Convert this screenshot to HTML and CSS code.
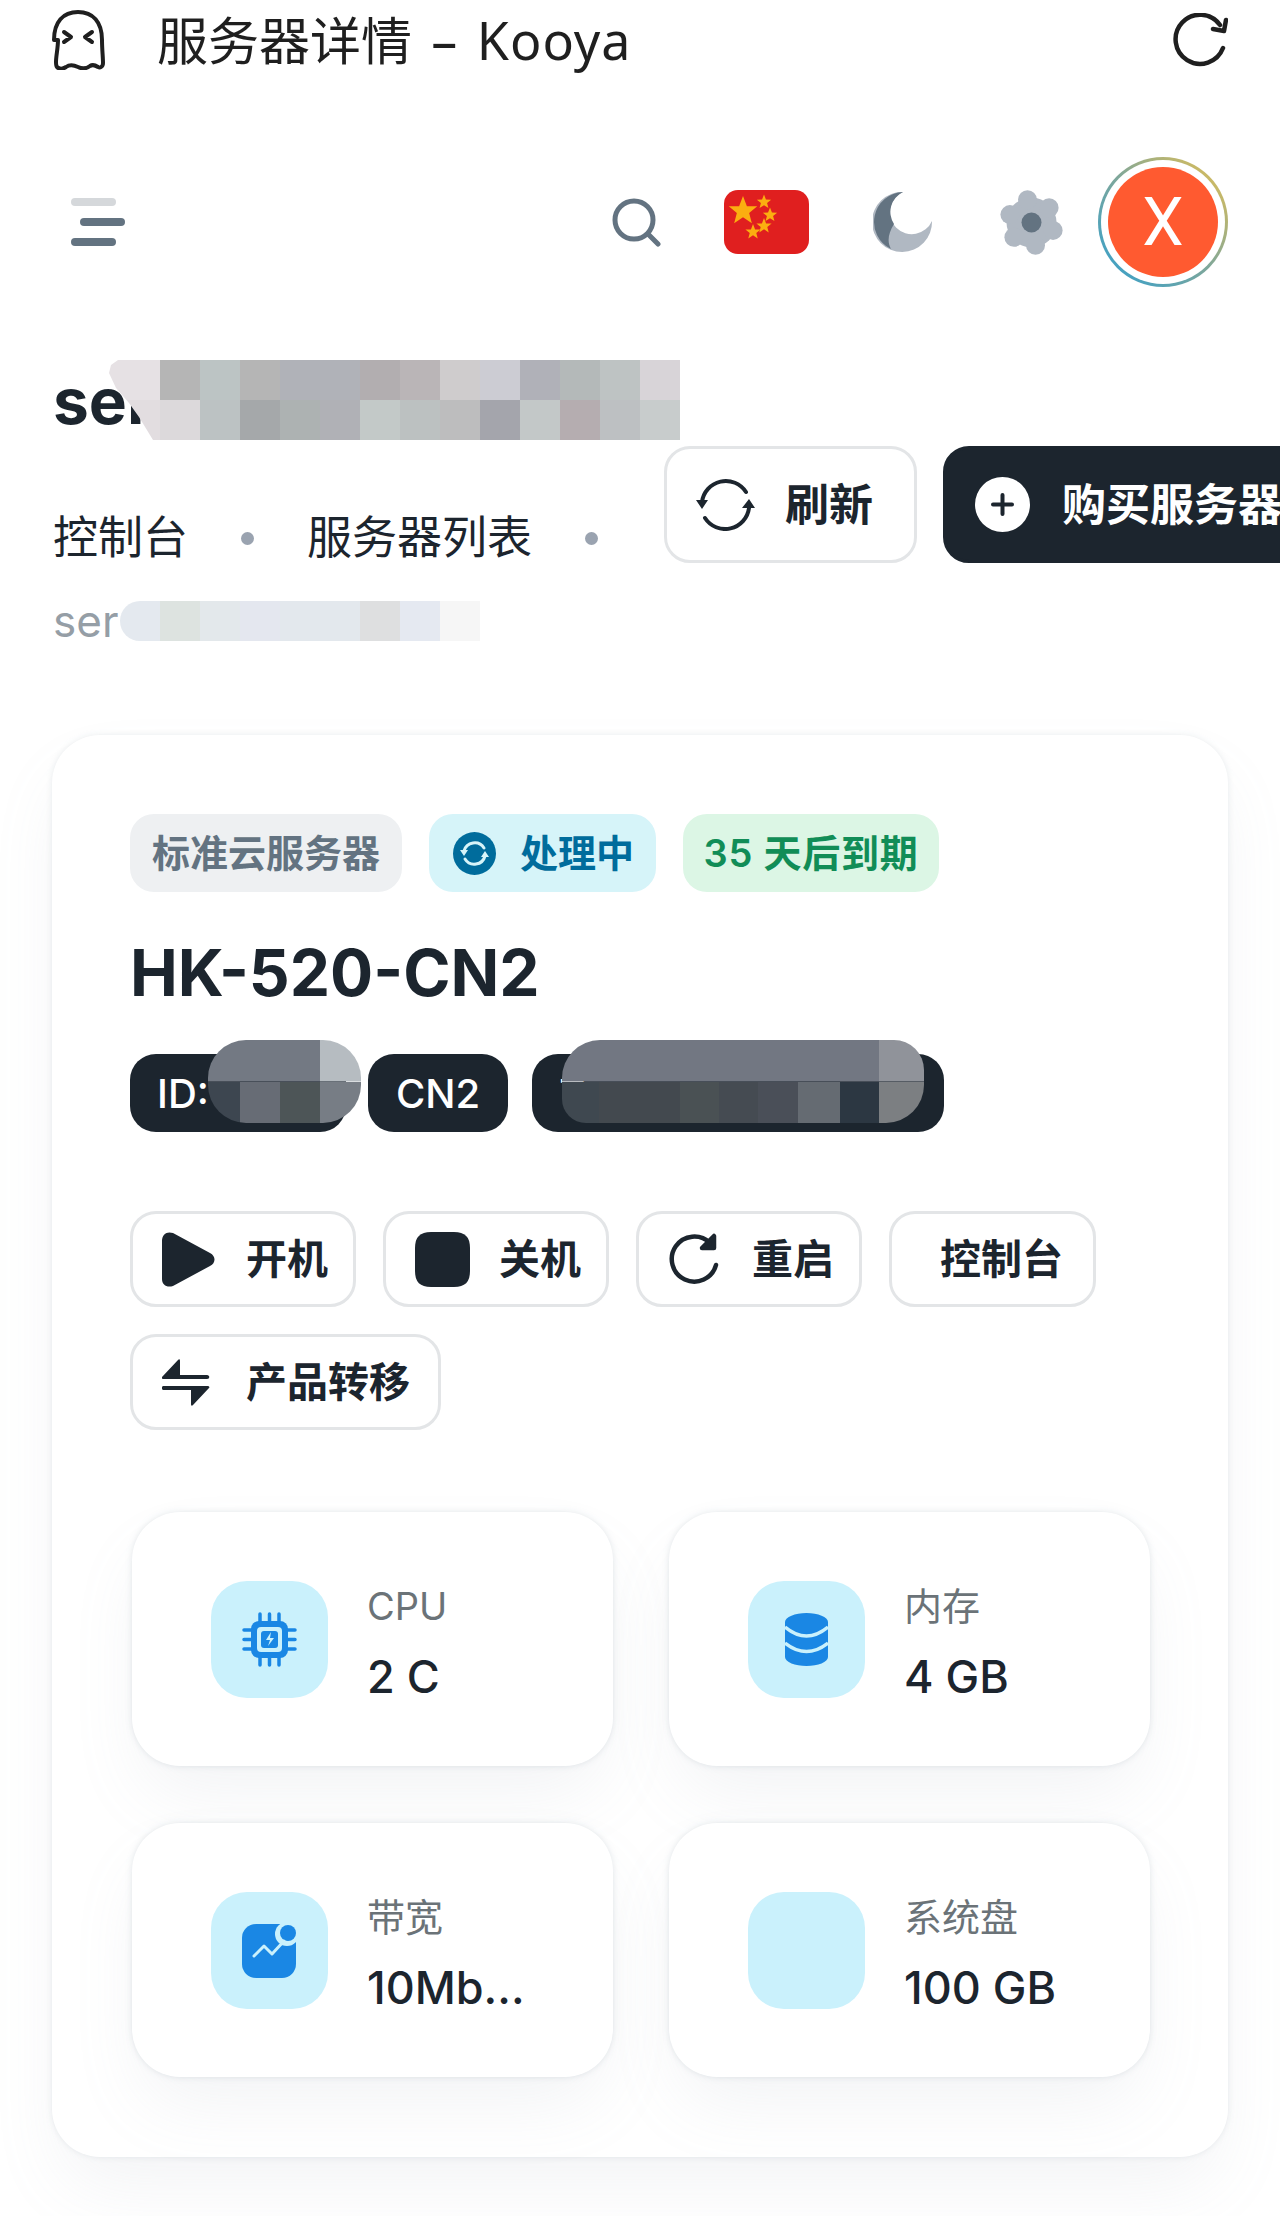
FILE: index.html
```html
<!DOCTYPE html>
<html lang="zh-CN">
<head>
  <meta charset="UTF-8" />
  <meta name="viewport" content="width=device-width, initial-scale=1" />
  <title>服务器详情 - Kooya</title>
  <link rel="stylesheet" href="styles.css">
</head>
<body>
<div class="page">

  <!-- Browser bar -->
  <header class="app-bar">
    <svg class="ghost" viewBox="0 0 54 60" fill="none" stroke="#1f1f1f" stroke-width="4" stroke-linecap="round" stroke-linejoin="round">
      <path d="M3 30C3 12 12 2 27 2s24 10 24 28c0 9 1 17 1 23 0 4-3 5-5 4-3-2-5-3-8-1-4 3-8 3-12 1-4-2-8-3-12 0-3 2-6 3-9 0-1-1-1-3-1-5 0-6 2-14 2-22z"/>
      <path d="M13 22l7 5-7 5M41 22l-7 5 7 5"/>
    </svg>
    <div class="app-title">服务器详情 <span class="app-name">– Kooya</span></div>
    <svg class="reload" viewBox="0 0 55 55" fill="none" stroke="#1f1f1f" stroke-width="4.5" stroke-linecap="round" stroke-linejoin="round">
      <path d="M50 35A24.5 24.5 0 1 1 47 12"/>
      <path d="M53 7l-2 11-11-2"/>
    </svg>
  </header>

  <!-- Top navigation -->
  <nav class="top-nav">
    <div class="burger">
      <span class="burger-bar burger-faded"></span>
      <span class="burger-bar burger-mid"></span>
      <span class="burger-bar"></span>
    </div>
    <svg class="nav-search" viewBox="0 0 49 49" fill="none" stroke="#637381" stroke-width="5" stroke-linecap="round">
      <circle cx="22" cy="22" r="19"/>
      <path d="M37 37l9 9"/>
    </svg>
    <svg class="nav-flag" viewBox="0 0 85 64">
      <defs>
        <polygon id="star" points="0,-10 2.6,-3.2 9.5,-3.1 4.1,1.3 5.9,8.1 0,4.2 -5.9,8.1 -4.1,1.3 -9.5,-3.1 -2.6,-3.2"/>
      </defs>
      <rect width="85" height="64" rx="14" fill="#e01f1f"/>
      <g fill="#fbae10">
        <use href="#star" transform="translate(19 21) scale(1.5)"/>
        <use href="#star" transform="translate(40 12) scale(.75)"/>
        <use href="#star" transform="translate(46 25) scale(.75)"/>
        <use href="#star" transform="translate(40 36) scale(.8)"/>
        <use href="#star" transform="translate(29 42) scale(.8)"/>
      </g>
    </svg>
    <svg class="nav-moon" viewBox="0 0 60 60">
      <path fill="#b0b8c2" d="M30 0A30 30 0 1 0 59 29 22 22 0 1 1 30 0z"/>
      <path fill="#637381" d="M30 0A30 30 0 0 0 18 57C14 50 15 42 21 32A22 22 0 0 1 30 0z"/>
    </svg>
    <svg class="nav-gear" viewBox="0 0 65 65">
      <g fill="#b0b8c2">
        <circle cx="32.5" cy="32.5" r="25"/>
        <circle cx="28.5" cy="9.8" r="9.5"/>
        <circle cx="50.1" cy="17.7" r="9.5"/>
        <circle cx="54.1" cy="40.4" r="9.5"/>
        <circle cx="36.5" cy="55.2" r="9.5"/>
        <circle cx="14.9" cy="47.3" r="9.5"/>
        <circle cx="10.9" cy="24.6" r="9.5"/>
      </g>
      <circle cx="32.5" cy="32.5" r="10" fill="#637381"/>
    </svg>
    <div class="avatar-ring">
      <div class="avatar-gap">
        <div class="avatar">X</div>
      </div>
    </div>
  </nav>

  <!-- Page heading -->
  <section class="page-head">
    <h1 class="page-title">ser<span class="mosaic mosaic-title"></span></h1>
    <div class="head-row">
      <div class="crumbs">
        <span class="crumb">控制台</span>
        <span class="crumb-dot"></span>
        <span class="crumb">服务器列表</span>
        <span class="crumb-dot"></span>
        <span class="crumb crumb-current">ser<span class="mosaic mosaic-crumb"></span></span>
      </div>
      <div class="head-actions">
        <button class="btn head-btn head-refresh">
          <svg class="refresh-icon" viewBox="0 0 59 53" fill="none" stroke="#1c252e" stroke-width="4" stroke-linecap="round">
            <path d="M6 24A24 24 0 0 1 50 14"/>
            <path d="M53 30A24 24 0 0 1 9 40"/>
            <path fill="#1c252e" stroke="none" d="M0 22h12l-6 9zM53 21l6 9H46z"/>
          </svg>
          刷新
        </button>
        <button class="btn head-btn head-buy">
          <svg class="plus-icon" viewBox="0 0 55 55">
            <circle cx="27.5" cy="27.5" r="27.5" fill="#fff"/>
            <path d="M18 27.5h19M27.5 18v19" stroke="#1c252e" stroke-width="4" stroke-linecap="round"/>
          </svg>
          购买服务器
        </button>
      </div>
    </div>
  </section>

  <!-- Server card -->
  <main class="server-card">
    <div class="chips">
      <span class="chip chip-grey">标准云服务器</span>
      <span class="chip chip-blue">
        <svg class="chip-icon" viewBox="0 0 43 43">
          <circle cx="21.5" cy="21.5" r="21.5" fill="#006c9c"/>
          <path d="M11 19a11 11 0 0 1 20-3M32 24a11 11 0 0 1-20 3" fill="none" stroke="#d6f4f9" stroke-width="3" stroke-linecap="round"/>
          <path d="M7 18h8l-4 6zM36 25h-8l4-6z" fill="#d6f4f9"/>
        </svg>
        处理中
      </span>
      <span class="chip chip-green">35 天后到期</span>
    </div>

    <h2 class="server-name">HK-520-CN2</h2>

    <div class="tags">
      <span class="tag tag-id">ID:<span class="mosaic mosaic-id"></span></span>
      <span class="tag tag-cn2">CN2</span>
      <span class="tag tag-long">T<span class="mosaic mosaic-long"></span></span>
    </div>

    <div class="actions">
      <button class="btn">
        <svg class="btn-icon" viewBox="0 0 55 55">
          <path fill="#1c252e" d="M0 9C0 2 5-1 11 1l37 20c6 3 6 10 0 13L11 54C5 56 0 53 0 47z"/>
        </svg>
        开机
      </button>
      <button class="btn">
        <svg class="btn-icon" viewBox="0 0 55 55">
          <path fill="#1c252e" d="M16 0h23c11 0 16 5 16 16v23c0 11-5 16-16 16H16C5 55 0 50 0 39V16C0 5 5 0 16 0z"/>
        </svg>
        关机
      </button>
      <button class="btn">
        <svg class="btn-icon" viewBox="0 0 55 55" fill="none" stroke="#1c252e" stroke-width="4.5" stroke-linecap="round" stroke-linejoin="round">
          <path d="M48 33A22.5 22.5 0 1 1 42 11"/>
          <path fill="#1c252e" d="M46 4v12H34z"/>
        </svg>
        重启
      </button>
      <button class="btn btn-plain">控制台</button>
      <button class="btn btn-wide">
        <svg class="btn-icon" viewBox="0 -4 55 55" fill="#1c252e">
          <path d="M0 18 16 1c1-1 2-1 2 1v14h27c3 0 3 4 0 4H2c-2 0-3-1-2-2zM47 29 31 46c-1 1-2 1-2-1V31H2c-3 0-3-4 0-4h43c2 0 3 1 2 2z"/>
        </svg>
        产品转移
      </button>
    </div>

    <div class="stats">
      <div class="stat">
        <div class="stat-box">
          <svg class="stat-icon" viewBox="0 0 55 55">
            <path d="M18 10V2M27.5 10V2M37 10V2M18 53v-8M27.5 53v-8M37 53v-8M10 18H2M10 27.5H2M10 37H2M53 18h-8M53 27.5h-8M53 37h-8" stroke="#1a87e4" stroke-width="3.5" stroke-linecap="round"/>
            <rect x="9" y="9" width="37" height="37" rx="8" fill="#1a87e4"/>
            <rect x="15" y="15" width="25" height="25" rx="4" fill="#caf1fc"/>
            <rect x="19" y="19" width="17" height="17" rx="3" fill="#1a87e4"/>
            <path d="M29 20l-5 8h4l-2 6 6-8h-4z" fill="#caf1fc"/>
          </svg>
        </div>
        <div class="stat-text">
          <div class="stat-label">CPU</div>
          <div class="stat-value">2 C</div>
        </div>
      </div>
      <div class="stat">
        <div class="stat-box">
          <svg class="stat-icon stat-icon-db" viewBox="0 0 43 53">
            <path fill="#1a87e4" d="M0 9C0 4 10 0 21.5 0S43 4 43 9v35c0 5-10 9-21.5 9S0 49 0 44z"/>
            <path d="M0 14Q21.5 32 43 14M0 30Q21.5 47 43 30" fill="none" stroke="#caf1fc" stroke-width="3.5"/>
          </svg>
        </div>
        <div class="stat-text">
          <div class="stat-label">内存</div>
          <div class="stat-value">4 GB</div>
        </div>
      </div>
      <div class="stat">
        <div class="stat-box">
          <svg class="stat-icon" viewBox="0 0 55 55">
            <rect y="1" width="54" height="54" rx="14" fill="#1a87e4"/>
            <circle cx="45" cy="11" r="12" fill="#caf1fc"/>
            <circle cx="46" cy="10" r="8" fill="#1a87e4"/>
            <path d="M12 33l10-10 8 8 12-13" fill="none" stroke="#caf1fc" stroke-width="3" stroke-linecap="round" stroke-linejoin="round"/>
          </svg>
        </div>
        <div class="stat-text">
          <div class="stat-label">带宽</div>
          <div class="stat-value">10Mb...</div>
        </div>
      </div>
      <div class="stat">
        <div class="stat-box"></div>
        <div class="stat-text">
          <div class="stat-label">系统盘</div>
          <div class="stat-value">100 GB</div>
        </div>
      </div>
    </div>
  </main>

</div>
</body>
</html>
```

FILE: styles.css
```css
* {
  box-sizing: border-box;
}
body {
  margin: 0;
  background-color: #fff;
  color: #1c252e;
  font-family: Inter, "Noto Sans CJK SC", sans-serif;
}
.page {
  width: 1280px;
  height: 2216px;
  overflow: hidden;
}

/* browser bar */
.app-bar {
  display: flex;
  align-items: center;
  height: 80px;
  padding: 0 52px 0 51px;
}
.ghost {
  width: 54px;
  height: 60px;
}
.app-title {
  margin-left: 52px;
  font-family: "Noto Sans", "Noto Sans CJK SC", sans-serif;
  font-size: 51px;
  line-height: 70px;
  color: #1f1f1f;
}
.app-name {
  margin-left: 6px;
  font-size: 52px;
  letter-spacing: 1px;
  word-spacing: 4px;
}
.reload {
  width: 55px;
  height: 55px;
  margin-left: auto;
}

/* top nav */
.top-nav {
  display: flex;
  align-items: center;
  height: 130px;
  margin-top: 77px;
  padding: 0 52px 0 71px;
}
.burger {
  display: flex;
  flex-direction: column;
  gap: 12px;
  width: 54px;
}
.burger-bar {
  display: block;
  width: 45px;
  height: 8px;
  border-radius: 4px;
  background-color: #637381;
}
.burger-faded {
  background-color: #d5d8db;
}
.burger-mid {
  margin-left: 9px;
}
.nav-search {
  width: 49px;
  height: 49px;
  margin-left: auto;
}
.nav-flag {
  width: 85px;
  height: 64px;
  margin-left: 63px;
}
.nav-moon {
  width: 60px;
  height: 60px;
  margin-left: 64px;
}
.nav-gear {
  width: 65px;
  height: 65px;
  margin-left: 66px;
}
.avatar-ring {
  width: 130px;
  height: 130px;
  margin-left: 34px;
  padding: 3px;
  border-radius: 50%;
  background: linear-gradient(to top right, #2f9fd0, #7fa79a 50%, #e8c050);
}
.avatar-gap {
  width: 100%;
  height: 100%;
  padding: 7px;
  border-radius: 50%;
  background-color: #fff;
}
.avatar {
  display: flex;
  align-items: center;
  justify-content: center;
  width: 100%;
  height: 100%;
  border-radius: 50%;
  background-color: #ff5a30;
  color: #fff;
  font-family: Roboto, sans-serif;
  font-size: 66px;
}

/* heading */
.page-head {
  margin-top: 73px;
  padding-left: 53px;
}
.page-title {
  position: relative;
  height: 86px;
  margin: 0;
  font-size: 64px;
  font-weight: 700;
  line-height: 82px;
}
.mosaic {
  position: absolute;
  display: block;
}
.mosaic-title {
  top: 0;
  left: 56px;
  width: 571px;
  height: 80px;
  clip-path: polygon(9px 0, 2px 5px, 0 13px, 7px 28px, 20px 43px, 30px 57px, 44px 80px, 100% 80px, 100% 0);
  background:
    linear-gradient(to right, #e6e1e4 51px, #b5b5b5 51px 91px, #bcc4c4 91px 131px, #b5b5b5 131px 171px, #b0b2b8 171px 251px, #b2aeb0 251px 291px, #bab5b7 291px 331px, #cfcccd 331px 371px, #ccccd3 371px 411px, #b0b1b8 411px 451px, #b4b9b9 451px 491px, #bec3c3 491px 531px, #d8d4d8 531px) top / 100% 50% no-repeat,
    linear-gradient(to right, #e2dde0 51px, #dcd9db 51px 91px, #bcc2c3 91px 131px, #a5a8aa 131px 171px, #adb2b2 171px 211px, #b0b1b6 211px 251px, #c3c9c8 251px 291px, #bcc1c1 291px 331px, #bdbdbe 331px 371px, #a4a5ac 371px 411px, #c3c8c8 411px 451px, #b5adb0 451px 491px, #bdc0c2 491px 531px, #c8cccc 531px) bottom / 100% 50% no-repeat;
}
.head-row {
  display: flex;
  gap: 26px;
}
.crumbs {
  display: flex;
  flex-wrap: wrap;
  align-items: center;
  gap: 17px 53px;
  flex: none;
  width: 585px;
  padding-top: 59px;
}
.crumb {
  font-size: 45px;
  line-height: 66px;
}
.crumb-dot {
  width: 13px;
  height: 13px;
  border-radius: 50%;
  background-color: #9aa3b0;
}
.crumb-current {
  position: relative;
  width: 100%;
  font-size: 44px;
  color: #959ea6;
}
.mosaic-crumb {
  top: 13px;
  left: 67px;
  width: 360px;
  height: 40px;
  border-radius: 20px 0 0 20px;
  background: linear-gradient(to right, #e4e9ef 40px, #dde3e0 40px 80px, #e3e8eb 80px 120px, #e4e7ef 120px 160px, #e3e8ed 160px 240px, #dedfe0 240px 280px, #e5e9f1 280px 320px, #f6f6f6 320px);
}
.head-actions {
  display: flex;
  flex: none;
  gap: 26px;
}

/* buttons */
.btn {
  display: inline-flex;
  align-items: center;
  gap: 29px;
  height: 96px;
  padding: 0 25px 6px 29px;
  border: 3px solid #e3e5e7;
  border-radius: 26px;
  background-color: #fff;
  color: #1c252e;
  font-family: inherit;
  font-size: 41px;
  font-weight: 600;
}
.btn-icon {
  width: 55px;
  height: 55px;
  margin-bottom: -6px;
}
.head-btn {
  gap: 30px;
  height: 117px;
  font-size: 44px;
}
.head-refresh {
  width: 253px;
}
.head-buy {
  flex: none;
  gap: 32px;
  width: 460px;
  border-color: #1c252e;
  background-color: #1c252e;
  color: #fff;
}
.refresh-icon {
  width: 59px;
  height: 53px;
  margin-bottom: -6px;
}
.plus-icon {
  width: 55px;
  height: 55px;
  margin-bottom: -6px;
}
.btn-plain {
  padding: 0 30px 6px 48px;
}
.btn-wide {
  padding-right: 28px;
}

/* server card */
.server-card {
  margin: 81px 52px 0;
  padding: 79px 78px 80px;
  border-radius: 48px;
  background-color: #fff;
  box-shadow: 0 0 6px rgba(145, 158, 171, 0.2), 0 36px 72px -12px rgba(145, 158, 171, 0.12);
}
.chips {
  display: flex;
  gap: 27px;
}
.chip {
  display: inline-flex;
  align-items: center;
  gap: 26px;
  height: 78px;
  padding: 0 22px 6px;
  border-radius: 24px;
  font-size: 38px;
  font-weight: 600;
  white-space: nowrap;
}
.chip-grey {
  background-color: #eef0f2;
  color: #637381;
}
.chip-blue {
  gap: 24px;
  padding-left: 24px;
  background-color: #d6f4f9;
  color: #006c9c;
}
.chip-green {
  justify-content: center;
  width: 256px;
  padding: 0 0 6px;
  background-color: #dcf6e5;
  color: #118d57;
  letter-spacing: 0.8px;
}
.chip-icon {
  width: 43px;
  height: 43px;
  margin-bottom: -6px;
}
.server-name {
  margin: 41px 0 0;
  font-size: 64px;
  font-weight: 700;
  line-height: 80px;
}
.tags {
  display: flex;
  gap: 24px;
  margin-top: 41px;
}
.tag {
  position: relative;
  display: inline-flex;
  align-items: center;
  height: 78px;
  padding: 0 27px;
  border-radius: 26px;
  background-color: #1c252e;
  color: #fff;
  font-size: 40px;
  font-weight: 500;
}
.tag-id {
  width: 216px;
  margin-right: -2px;
}
.tag-cn2 {
  padding: 0 28px;
}
.tag-long {
  width: 412px;
}
.mosaic-id {
  top: -14px;
  left: 78px;
  width: 153px;
  height: 83px;
  border-radius: 38px;
  background:
    linear-gradient(to right, #737983 112px, #b6bcc1 112px) top / 100% 50% no-repeat,
    linear-gradient(to right, #3d4650 32px, #676c75 32px 72px, #4d5557 72px 112px, #777d85 112px) bottom / 100% 50% no-repeat;
}
.mosaic-long {
  top: -14px;
  left: 30px;
  width: 362px;
  height: 83px;
  border-radius: 38px 30px 38px 24px;
  background:
    linear-gradient(to right, #727782 317px, #90939a 317px) top / 100% 50% no-repeat,
    linear-gradient(to right, #3f4850 37px, #43494f 37px 118px, #4a5154 118px 157px, #454b52 157px 196px, #4a4f58 196px 236px, #656b72 236px 278px, #2c3742 278px 317px, #7c7f82 317px) bottom / 100% 50% no-repeat;
}
.actions {
  display: flex;
  flex-wrap: wrap;
  gap: 27px;
  margin-top: 79px;
}

/* stats */
.stats {
  display: grid;
  grid-template-columns: 1fr 1fr;
  gap: 57px 56px;
  margin-top: 82px;
  padding-left: 2px;
}
.stat {
  display: flex;
  align-items: center;
  gap: 39px;
  height: 254px;
  padding-left: 79px;
  border-radius: 48px;
  background-color: #fff;
  box-shadow: 0 0 6px rgba(145, 158, 171, 0.25), 0 36px 72px -12px rgba(145, 158, 171, 0.12);
}
.stat-box {
  display: flex;
  flex: none;
  align-items: center;
  justify-content: center;
  width: 117px;
  height: 117px;
  border-radius: 36px;
  background-color: #caf1fc;
}
.stat-icon {
  width: 55px;
  height: 55px;
}
.stat-icon-db {
  width: 43px;
  height: 53px;
}
.stat-text {
  padding-top: 6px;
}
.stat-label {
  color: #6b7378;
  font-size: 38px;
  line-height: 50px;
}
.stat-value {
  margin-top: 19px;
  font-size: 45px;
  font-weight: 500;
  line-height: 54px;
}
```
